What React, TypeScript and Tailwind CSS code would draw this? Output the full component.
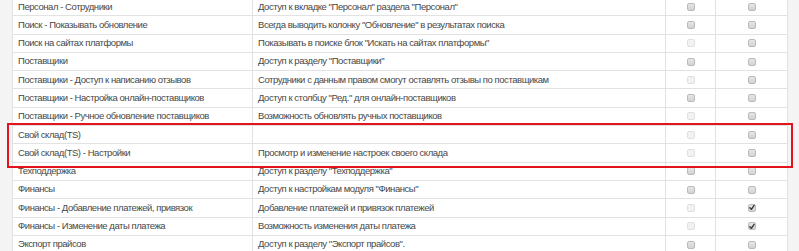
type Row = {
  name: string;
  desc: string;
  viewLocked: boolean;
  checked: boolean;
};

const rows: Row[] = [
  { name: "Персонал - Сотрудники", desc: 'Доступ к вкладке "Персонал" раздела "Персонал"', viewLocked: false, checked: false },
  { name: "Поиск - Показывать обновление", desc: 'Всегда выводить колонку "Обновление" в результатах поиска', viewLocked: false, checked: false },
  { name: "Поиск на сайтах платформы", desc: 'Показывать в поиске блок "Искать на сайтах платформы"', viewLocked: true, checked: false },
  { name: "Поставщики", desc: 'Доступ к разделу "Поставщики"', viewLocked: false, checked: false },
  { name: "Поставщики - Доступ к написанию отзывов", desc: "Сотрудники с данным правом смогут оставлять отзывы по поставщикам", viewLocked: true, checked: false },
  { name: "Поставщики - Настройка онлайн-поставщиков", desc: 'Доступ к столбцу "Ред." для онлайн-поставщиков', viewLocked: false, checked: false },
  { name: "Поставщики - Ручное обновление поставщиков", desc: "Возможность обновлять ручных поставщиков", viewLocked: true, checked: false },
  { name: "Свой склад(TS)", desc: "", viewLocked: true, checked: false },
  { name: "Свой склад(TS) - Настройки", desc: "Просмотр и изменение настроек своего склада", viewLocked: true, checked: false },
  { name: "Техподдержка", desc: 'Доступ к разделу "Техподдержка"', viewLocked: false, checked: false },
  { name: "Финансы", desc: 'Доступ к настройкам модуля "Финансы"', viewLocked: false, checked: false },
  { name: "Финансы - Добавление платежей, привязок", desc: "Добавление платежей и привязок платежей", viewLocked: true, checked: true },
  { name: "Финансы - Изменение даты платежа", desc: "Возможность изменения даты платежа", viewLocked: true, checked: true },
  { name: "Экспорт прайсов", desc: 'Доступ к разделу "Экспорт прайсов".', viewLocked: false, checked: false },
];

function Checkbox({ disabled, checked }: { disabled?: boolean; checked?: boolean }) {
  if (disabled) {
    return <span className="block w-[8px] h-[8px] rounded-[2px] border border-[#e0e0e0] bg-[#f2f2f2]" />;
  }
  return (
    <span className="flex items-center justify-center w-[8px] h-[8px] rounded-[2px] border border-[#bbbbbb] bg-gradient-to-b from-[#e6e6e6] to-[#d2d2d2]">
      {checked && (
        <svg width="7" height="7" viewBox="0 0 10 10">
          <path d="M1.5 5.5 L4 8 L8.5 1.5" fill="none" stroke="#333" strokeWidth="2.2" strokeLinecap="round" strokeLinejoin="round" />
        </svg>
      )}
    </span>
  );
}

export default function App() {
  return (
    <div className="relative w-[799px] h-[251px] overflow-hidden bg-[#f4f4f4] font-['Liberation_Sans',Arial,sans-serif] text-[9.5px] tracking-[-0.45px] text-[#484848]">
      <div className="ml-[12px] w-[776px] -mt-[2px] bg-white border-x border-[#e2e2e2]">
        {rows.map((r) => (
          <div
            key={r.name}
            className="grid grid-cols-[240px_413px_50px_71px] h-[18.3px] border-b border-[#e2e2e2]"
          >
            <div className="flex items-center pl-[5px] border-r border-[#e2e2e2] whitespace-nowrap overflow-hidden">
              {r.name}
            </div>
            <div className="flex items-center pl-[5px] border-r border-[#e2e2e2] whitespace-nowrap overflow-hidden">
              {r.desc}
            </div>
            <div className="flex items-center justify-center border-r border-[#e2e2e2]">
              <Checkbox disabled={r.viewLocked} />
            </div>
            <div className="flex items-center justify-center">
              <Checkbox checked={r.checked} />
            </div>
          </div>
        ))}
      </div>
      <div className="absolute left-[7px] top-[123px] w-[786px] h-[45px] border-2 border-[#e3141b]" />
    </div>
  );
}
